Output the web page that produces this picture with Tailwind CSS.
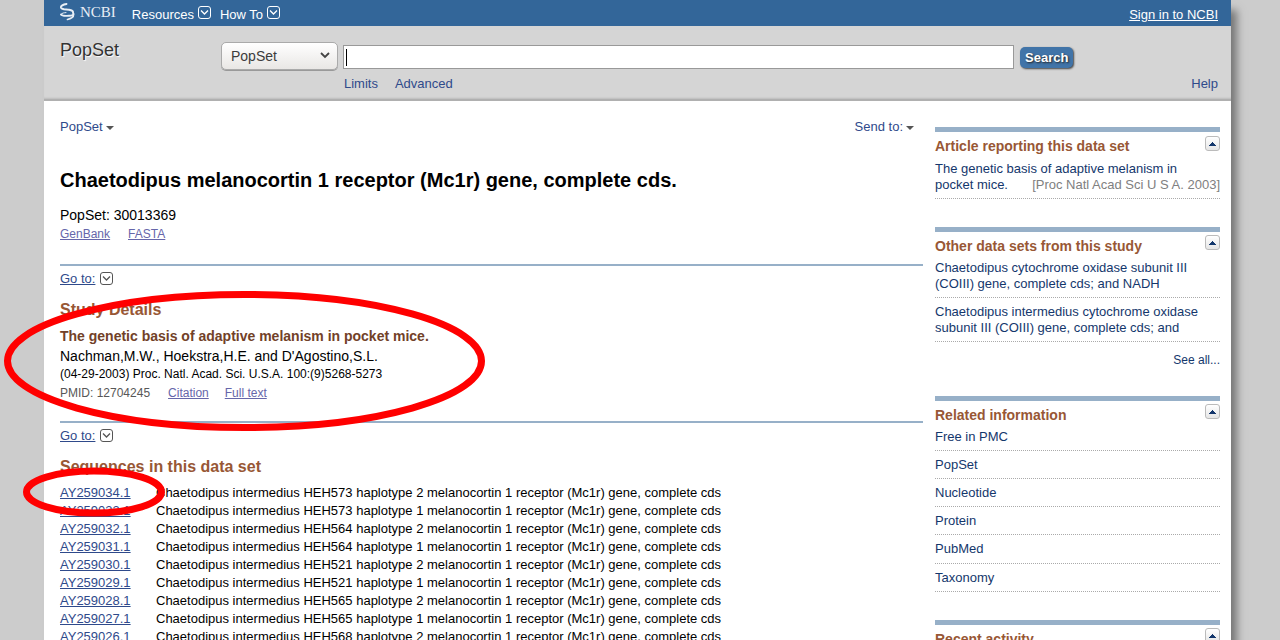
<!DOCTYPE html>
<html lang="en">
<head>
<meta charset="utf-8">
<title>Chaetodipus melanocortin 1 receptor (Mc1r) gene, complete cds. - PopSet - NCBI</title>
<script src="https://cdn.jsdelivr.net/npm/@tailwindcss/browser@4"></script>
</head>
<body class="relative h-screen overflow-hidden bg-[#cccccc] font-['Liberation_Sans',Arial,sans-serif] text-[13px] leading-4 text-black">

<svg class="hidden" aria-hidden="true">
  <symbol id="box-down" viewBox="0 0 13 13">
    <rect x=".5" y=".5" width="12" height="12" rx="2.5" fill="none" stroke="currentColor"/>
    <path d="M3 4.500l3.500 3.500 3.500-3.500" fill="none" stroke="currentColor" stroke-width="1.300"/>
  </symbol>
  <symbol id="caret" viewBox="0 0 8 4"><path d="M0 0h8L4 4z" fill="currentColor"/></symbol>
  <symbol id="up" viewBox="0 0 7 4"><path d="M3 0h1v1h1v1h1v1h1v1H0V3h1V2h1V1h1z" fill="currentColor"/></symbol>
</svg>

<div class="ml-[44px] mr-[49px] min-h-full bg-white shadow-[8px_8px_8px_-2px_#777777]">
  <nav class="flex h-[26px] items-center bg-[#336699] pl-4 pr-[13px] text-white">
    <a href="#" class="flex h-[26px] items-start gap-[5px] font-['Liberation_Serif',serif] text-[15px] leading-6 text-[#e8eef5]" aria-label="NCBI">
      <svg class="mt-[3px] h-[18px] w-[15px]" viewBox="0 0 15 18" fill="none" stroke="currentColor" stroke-linecap="round">
        <path d="M6.500 1C3 1.500.5 3 1 4.600 1.800 6.800 6 6.300 9 6.800c3 .5 4.500 1.400 4 3" stroke-width="1.900"/>
        <path d="M1 11.500c1.500 2 4.500 1.300 8 1.300 2.500 0 4.500-.8 4.500-2" stroke-width="1.900"/>
        <path d="M13.500 11.500c.3 2.200-2.500 4.300-6 5" stroke-width="1.700"/>
        <path d="M1 11.300c1-1.300 3-1.600 5-1.700" stroke-width="1"/>
      </svg>
      <span>NCBI</span>
    </a>
    <a href="#" class="ml-4 flex items-center gap-1"><span class="pt-[3px]">Resources</span><svg class="mb-[1px] size-[13px]"><use href="#box-down"/></svg></a>
    <a href="#" class="ml-[9px] flex items-center gap-1"><span class="pt-[3px]">How To</span><svg class="mb-[1px] size-[13px]"><use href="#box-down"/></svg></a>
    <a href="#" class="ml-auto pt-[3px] underline">Sign in to NCBI</a>
  </nav>

  <header class="flex h-[75px] items-start border-b-2 border-[#b0b0b0] bg-[#d5d5d5] pl-4 pr-[13px] pt-4 text-[#2f4a8b] shadow-[inset_0_-2px_2px_-1px_#bbbbbb]">
    <div class="w-[161px] shrink-0 text-[18px] leading-4 text-[#333333] [text-shadow:1px_1px_1px_#fff]">PopSet</div>
    <form class="flex grow items-start" onsubmit="return false">
      <div class="relative shrink-0">
        <label for="db" class="sr-only">Database</label>
        <select id="db" class="h-7 w-[117px] appearance-none rounded-[5px] border border-[#aaaaaa] bg-linear-to-b from-white to-[#e9e7e5] pl-[9px] text-[14px] text-[#3c3c3c] shadow-[0_1px_0_#999999]"><option>PopSet</option></select>
        <svg class="pointer-events-none absolute right-2 top-[10px] h-[7px] w-[10px] text-[#444444]" viewBox="0 0 10 7" fill="none" stroke="currentColor" stroke-width="1.800"><path d="M1 1l4 4 4-4"/></svg>
      </div>
      <div class="ml-[5px] grow pt-[3px]">
        <label for="term" class="sr-only">Search term</label>
        <input id="term" type="text" class="block h-6 w-full border border-[#999999] bg-white bg-[linear-gradient(#000,#000)] bg-[length:1px_17px] bg-[position:2px_3px] bg-no-repeat px-[2px] text-[14px] caret-transparent outline-none">
        <div class="flex gap-[17px] pl-[1px] pt-[7px]"><a href="#">Limits</a><a href="#">Advanced</a></div>
      </div>
      <button class="ml-[6px] mr-[144px] mt-[5px] h-[21px] w-[53px] shrink-0 rounded-[5px] bg-[#4174a8] font-bold text-white shadow-[1px_1px_2px_#444444] [text-shadow:1px_1px_2px_#222]">Search</button>
    </form>
    <a href="#" class="-ml-[26px] self-start pt-[34px]">Help</a>
  </header>

  <div class="flex gap-3 pl-4 pr-[11px]">
    <main class="min-w-0 grow pt-[18px]">
      <div class="flex justify-between pr-[9px] text-[#2f4a8b]">
        <a href="#" class="flex items-center gap-[3px]">PopSet<svg class="mt-[2px] h-1 w-2 text-[#555555]"><use href="#caret"/></svg></a>
        <a href="#" class="flex items-center gap-[3px]">Send to:<svg class="mt-[2px] h-1 w-2 text-[#555555]"><use href="#caret"/></svg></a>
      </div>
      <h1 class="mt-[33px] text-[20px] font-bold leading-6">Chaetodipus melanocortin 1 receptor (Mc1r) gene, complete cds.</h1>
      <p class="mt-[15px] text-[14px] leading-4">PopSet: 30013369</p>
      <div class="mt-[3px] flex gap-[18px] text-[12px] leading-4 text-[#6666aa] underline"><a href="#">GenBank</a><a href="#">FASTA</a></div>

      <section class="mt-[22px] border-t-2 border-[#97b0c8]">
        <a href="#" class="mt-[5px] flex w-fit items-center gap-[5px] text-[#2f4a8b]"><span class="underline">Go to:</span><svg class="mb-[1px] size-[13px] text-[#555555]"><use href="#box-down"/></svg></a>
        <h2 class="mt-[13px] text-[16px] font-bold leading-5 text-[#985735]">Study Details</h2>
        <h3 class="mt-[6px] text-[14px] font-bold leading-5 text-[#724128]">The genetic basis of adaptive melanism in pocket mice.</h3>
        <p class="text-[14px] leading-5">Nachman,M.W., Hoekstra,H.E. and D'Agostino,S.L.</p>
        <p class="text-[12px] leading-4">(04-29-2003) Proc. Natl. Acad. Sci. U.S.A. 100:(9)5268-5273</p>
        <div class="mt-[3px] flex text-[12px] leading-4 text-[#6666aa]"><span class="text-[#575757]">PMID: 12704245</span><a href="#" class="ml-[18px] underline">Citation</a><a href="#" class="ml-4 underline">Full text</a></div>
      </section>

      <section class="mt-5 border-t-2 border-[#97b0c8]">
        <a href="#" class="mt-[5px] flex w-fit items-center gap-[5px] text-[#2f4a8b]"><span class="underline">Go to:</span><svg class="mb-[1px] size-[13px] text-[#555555]"><use href="#box-down"/></svg></a>
        <h2 class="mt-[13px] text-[16px] font-bold leading-5 text-[#985735]">Sequences in this data set</h2>
        <table class="mt-[7px] border-collapse leading-[18px] [&_a]:text-[#2f4a8b] [&_a]:underline [&_td]:p-0 [&_td:first-child]:w-24">
          <tr><td><a href="#">AY259034.1</a></td><td>Chaetodipus intermedius HEH573 haplotype 2 melanocortin 1 receptor (Mc1r) gene, complete cds</td></tr>
          <tr><td><a href="#">AY259033.1</a></td><td>Chaetodipus intermedius HEH573 haplotype 1 melanocortin 1 receptor (Mc1r) gene, complete cds</td></tr>
          <tr><td><a href="#">AY259032.1</a></td><td>Chaetodipus intermedius HEH564 haplotype 2 melanocortin 1 receptor (Mc1r) gene, complete cds</td></tr>
          <tr><td><a href="#">AY259031.1</a></td><td>Chaetodipus intermedius HEH564 haplotype 1 melanocortin 1 receptor (Mc1r) gene, complete cds</td></tr>
          <tr><td><a href="#">AY259030.1</a></td><td>Chaetodipus intermedius HEH521 haplotype 2 melanocortin 1 receptor (Mc1r) gene, complete cds</td></tr>
          <tr><td><a href="#">AY259029.1</a></td><td>Chaetodipus intermedius HEH521 haplotype 1 melanocortin 1 receptor (Mc1r) gene, complete cds</td></tr>
          <tr><td><a href="#">AY259028.1</a></td><td>Chaetodipus intermedius HEH565 haplotype 2 melanocortin 1 receptor (Mc1r) gene, complete cds</td></tr>
          <tr><td><a href="#">AY259027.1</a></td><td>Chaetodipus intermedius HEH565 haplotype 1 melanocortin 1 receptor (Mc1r) gene, complete cds</td></tr>
          <tr><td><a href="#">AY259026.1</a></td><td>Chaetodipus intermedius HEH568 haplotype 2 melanocortin 1 receptor (Mc1r) gene, complete cds</td></tr>
        </table>
      </section>
    </main>

    <aside class="w-[285px] shrink-0 pt-[26px] text-[#14376c] [&_li]:border-b [&_li]:border-dotted [&_li]:border-[#aaaaaa]">
      <section class="border-t-[5px] border-[#97b0c8]">
        <div class="flex items-start justify-between pt-1">
          <h3 class="pb-[1px] text-[14px] font-bold leading-5 text-[#985735]">Article reporting this data set</h3>
          <button aria-label="Collapse" class="flex size-[15px] items-center justify-center rounded-[3px] border border-[#bbbbbb] bg-linear-to-b from-white to-[#e6e6e6]"><svg class="h-1 w-[7px]"><use href="#up"/></svg></button>
        </div>
        <ul class="pt-1">
          <li class="pb-[5px]"><a href="#">The genetic basis of adaptive melanism in<span class="flex justify-between"><span>pocket mice.</span><span class="text-[#808080]">[Proc Natl Acad Sci U S A. 2003]</span></span></a></li>
        </ul>
      </section>

      <section class="mt-7 border-t-[5px] border-[#97b0c8]">
        <div class="flex items-start justify-between pt-[3px]">
          <h3 class="pb-[1px] pt-[1px] text-[14px] font-bold leading-5 text-[#985735]">Other data sets from this study</h3>
          <button aria-label="Collapse" class="flex size-[15px] items-center justify-center rounded-[3px] border border-[#bbbbbb] bg-linear-to-b from-white to-[#e6e6e6]"><svg class="h-1 w-[7px]"><use href="#up"/></svg></button>
        </div>
        <ul class="pt-[3px]">
          <li class="pb-[5px]"><a href="#">Chaetodipus cytochrome oxidase subunit III<br>(COIII) gene, complete cds; and NADH</a></li>
          <li class="pb-[5px] pt-[6px]"><a href="#">Chaetodipus intermedius cytochrome oxidase subunit III (COIII) gene, complete cds; and</a></li>
        </ul>
        <div class="pt-[10px] text-right text-[12px] leading-4"><a href="#">See all...</a></div>
      </section>

      <section class="mt-7 border-t-[5px] border-[#97b0c8]">
        <div class="flex items-start justify-between pt-[3px]">
          <h3 class="pb-[1px] pt-[1px] text-[14px] font-bold leading-5 text-[#985735]">Related information</h3>
          <button aria-label="Collapse" class="flex size-[15px] items-center justify-center rounded-[3px] border border-[#bbbbbb] bg-linear-to-b from-white to-[#e6e6e6]"><svg class="h-1 w-[7px]"><use href="#up"/></svg></button>
        </div>
        <ul class="pt-[3px]">
          <li class="pb-[5px]"><a href="#">Free in PMC</a></li>
          <li class="pb-[5px] pt-[6px]"><a href="#">PopSet</a></li>
          <li class="pb-[5px] pt-[6px]"><a href="#">Nucleotide</a></li>
          <li class="pb-[5px] pt-[6px]"><a href="#">Protein</a></li>
          <li class="pb-[6px] pt-[6px]"><a href="#">PubMed</a></li>
          <li class="pb-[5px] pt-[6px]"><a href="#">Taxonomy</a></li>
        </ul>
      </section>

      <section class="mt-7 border-t-[5px] border-[#97b0c8]">
        <div class="flex items-start justify-between pt-[3px]">
          <h3 class="pb-[1px] pt-[1px] text-[14px] font-bold leading-5 text-[#985735]">Recent activity</h3>
          <button aria-label="Collapse" class="flex size-[15px] items-center justify-center rounded-[3px] border border-[#bbbbbb] bg-linear-to-b from-white to-[#e6e6e6]"><svg class="h-1 w-[7px]"><use href="#up"/></svg></button>
        </div>
      </section>
    </aside>
  </div>
</div>

<!-- Hand-drawn highlights over the citation and the first accession -->
<svg class="pointer-events-none absolute left-0 top-0 h-[540px] w-[500px]" fill="none" stroke="#ff0000" stroke-width="7" aria-hidden="true">
  <ellipse cx="244.500" cy="361" rx="237" ry="66.500"/>
  <ellipse cx="94" cy="492" rx="67.500" ry="21"/>
</svg>
</body>
</html>
